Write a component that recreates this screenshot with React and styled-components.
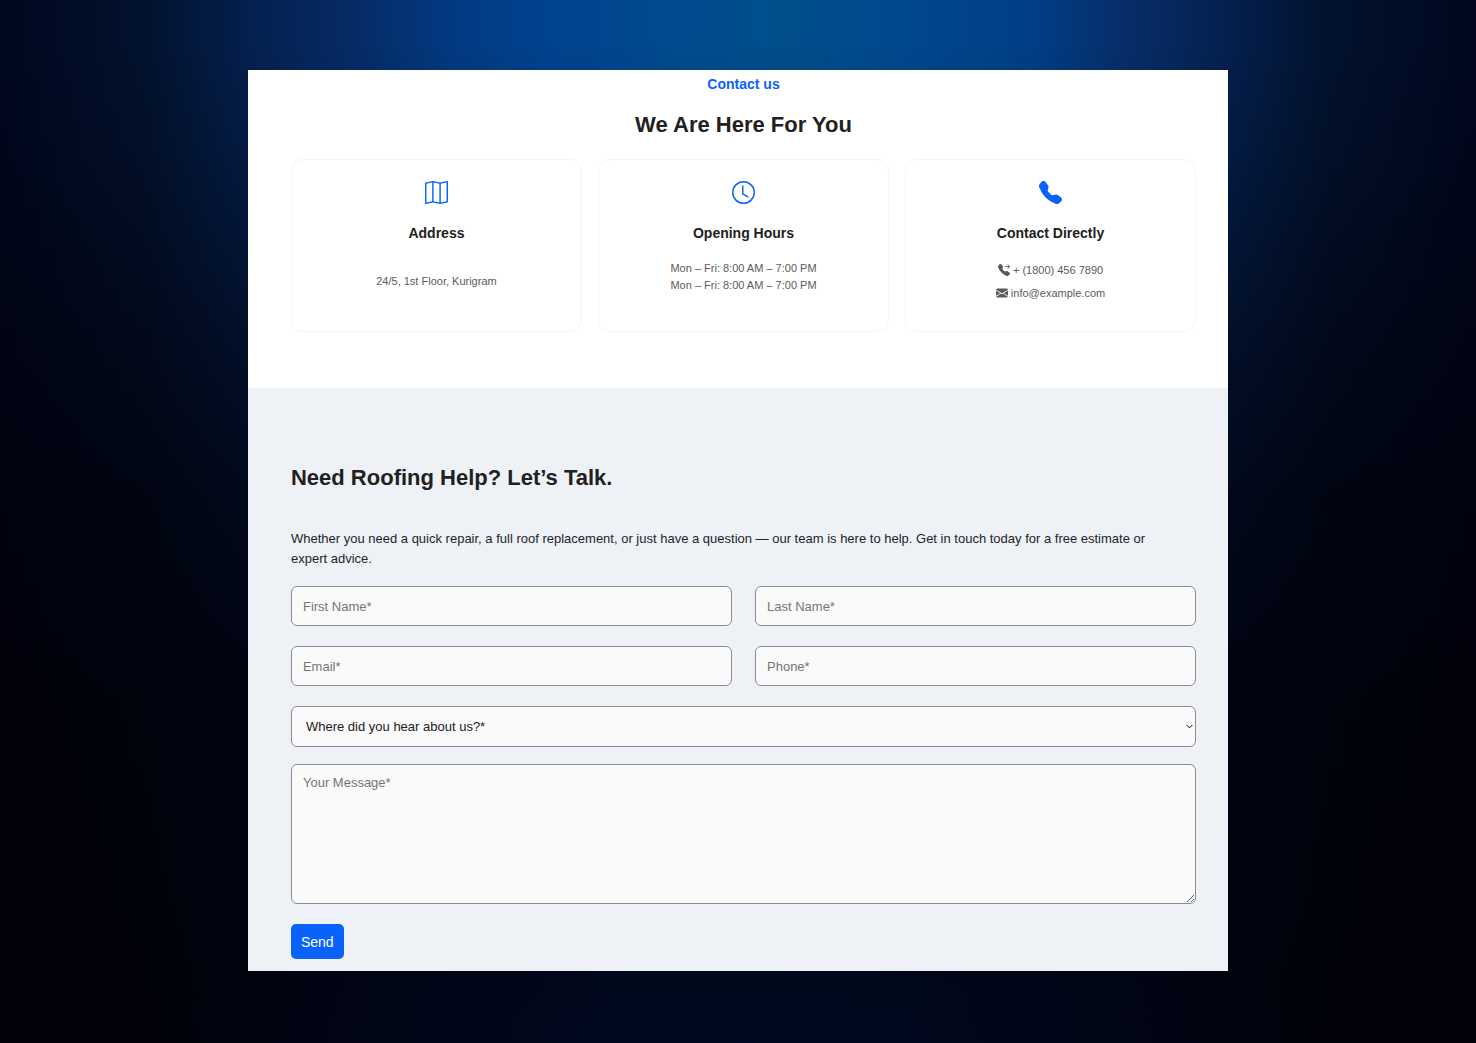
import React from 'react';
import styled, { createGlobalStyle } from 'styled-components';
import {
    BsMap,
    BsClock,
    BsTelephoneFill,
    BsTelephoneForwardFill,
    BsEnvelopeFill,
    BsChevronDown,
} from 'react-icons/bs';


const GlobalStyle = createGlobalStyle`
    * {
        box-sizing: border-box;
    }
    body {
        margin: 0;
        background: #00000a;
        color: #212529;
        font-family: "Liberation Sans", Arial, sans-serif;
        font-size: 14px;
        line-height: 20px;
    }
    h2, h3, p {
        margin: 0;
    }
`

const Backdrop = styled.div`
    min-height: 100vh;
    padding: 70px 16.8%;
    background:
        radial-gradient(ellipse 38% 16% at 50% 100%, rgba(0, 10, 40, 0.7), transparent),
        linear-gradient(
            rgba(0, 0, 8, 0) 4%,
            rgba(0, 0, 8, 0.18) 15%,
            rgba(0, 0, 8, 0.36) 24%,
            rgba(0, 0, 8, 0.54) 34%,
            rgba(0, 0, 8, 0.74) 48%,
            rgba(0, 0, 8, 0.88) 67%,
            rgba(0, 0, 8, 0.93) 100%
        ),
        linear-gradient(
            90deg,
            #00071e 0%,
            #02122e 10%,
            #04204e 17%,
            #062b66 24%,
            #023a82 31%,
            #00428e 37%,
            #004a8e 45%,
            #004e8a 53%,
            #00488e 61%,
            #003e86 70%,
            #062e6a 76%,
            #04204e 83%,
            #02122e 90%,
            #00071e 100%
        );
`

const Page = styled.main`
    background: #fff;
`

const InfoSection = styled.section`
    padding: 4px 32px 56px 43px;
    text-align: center;
`

const Eyebrow = styled.p`
    color: #0a63f8;
    font-weight: bold;
`

const Heading = styled.h2`
    color: #212121;
    font-size: 22px;
    line-height: 28px;
`

const InfoTitle = styled(Heading)`
    margin: 17px 0 20px;
`

const Cards = styled.div`
    display: grid;
    grid-template-columns: repeat(3, 1fr);
    gap: 16px;
`

const Card = styled.article`
    min-height: 173px;
    padding: 21px 16px;
    display: flex;
    flex-direction: column;
    align-items: center;
    border: 1px solid #f3f6f6;
    border-radius: 12px;

    > svg {
        color: #0a63f8;
        flex-shrink: 0;
    }
    h3 {
        margin: 19px 0 10px;
        color: #212121;
        font-size: 14px;
        line-height: 20px;
    }
`

const CardBody = styled.div`
    flex: 1;
    display: flex;
    flex-direction: column;
    justify-content: ${({ $align }) => $align || 'center'};
    padding-top: ${({ $align }) => ($align ? '7px' : '0')};
    color: #5a5a5a;
    font-size: 11px;
    line-height: 17px;
`

const ContactLink = styled.a`
    display: flex;
    justify-content: center;
    align-items: center;
    gap: 3px;
    padding: 3px 0;
    color: inherit;
    text-decoration: none;
`

const FormSection = styled.section`
    padding: 76px 32px 12px 43px;
    background: #eef2f7;
`

const Intro = styled.p`
    margin: 37px 0 17px;
    padding-right: 24px;
    font-size: 13px;
`

const Form = styled.form`
    display: flex;
    flex-direction: column;
    align-items: flex-start;
`

const FieldGrid = styled.div`
    width: 100%;
    display: grid;
    grid-template-columns: 1fr 1fr;
    gap: 20px 23px;
    margin-bottom: 20px;
`

const field = `
    width: 100%;
    border: 1px solid #8c8c90;
    border-radius: 6px;
    background: #fafafa;
    color: #212121;
    font-family: inherit;
    font-size: 13px;
    line-height: 20px;
    &::placeholder {
        color: #757575;
    }
`

const Input = styled.input`
    ${field}
    height: 40px;
    padding: 0 11px;
`

const SelectWrapper = styled.div`
    position: relative;
    width: 100%;
    margin-bottom: 17px;

    svg {
        position: absolute;
        top: 17px;
        right: 3px;
        pointer-events: none;
        stroke: currentColor;
        stroke-width: 1;
    }
`

const Select = styled.select`
    ${field}
    display: block;
    height: 41px;
    padding: 0 14px;
    appearance: none;
`

const Textarea = styled.textarea`
    ${field}
    display: block;
    height: 140px;
    padding: 8px 11px;
    margin-bottom: 20px;
    resize: vertical;
`

const SendButton = styled.button`
    height: 35px;
    padding: 0 10px;
    border: 0;
    border-radius: 5px;
    background: #0a63f8;
    color: #fff;
    font-family: inherit;
    font-size: 14px;
`

const fields = [
    { name: 'firstName', label: 'First Name*', type: 'text' },
    { name: 'lastName', label: 'Last Name*', type: 'text' },
    { name: 'email', label: 'Email*', type: 'email' },
    { name: 'phone', label: 'Phone*', type: 'tel' },
]


const App = () => {

    return (
        <>
            <GlobalStyle />
            <Backdrop>
                <Page>
                    <InfoSection>
                        <Eyebrow>Contact us</Eyebrow>
                        <InfoTitle>We Are Here For You</InfoTitle>
                        <Cards>
                            <Card>
                                <BsMap size={23} />
                                <h3>Address</h3>
                                <CardBody>
                                    <p>24/5, 1st Floor, Kurigram</p>
                                </CardBody>
                            </Card>
                            <Card>
                                <BsClock size={23} />
                                <h3>Opening Hours</h3>
                                <CardBody $align="flex-start">
                                    <p>Mon – Fri: 8:00 AM – 7:00 PM</p>
                                    <p>Mon – Fri: 8:00 AM – 7:00 PM</p>
                                </CardBody>
                            </Card>
                            <Card>
                                <BsTelephoneFill size={23} />
                                <h3>Contact Directly</h3>
                                <CardBody>
                                    <ContactLink href="tel:18004567890">
                                        <BsTelephoneForwardFill size={12} />
                                        + (1800) 456 7890
                                    </ContactLink>
                                    <ContactLink href="mailto:info@example.com">
                                        <BsEnvelopeFill size={12} />
                                        info@example.com
                                    </ContactLink>
                                </CardBody>
                            </Card>
                        </Cards>
                    </InfoSection>
                    <FormSection>
                        <Heading>Need Roofing Help? Let’s Talk.</Heading>
                        <Intro>
                            Whether you need a quick repair, a full roof replacement, or just have a question — our
                            team is here to help. Get in touch today for a free estimate or expert advice.
                        </Intro>
                        <Form onSubmit={(e) => e.preventDefault()}>
                            <FieldGrid>
                                {fields.map(({ name, label, type }) => (
                                    <Input key={name} name={name} type={type} placeholder={label} aria-label={label} />
                                ))}
                            </FieldGrid>
                            <SelectWrapper>
                                <Select name="source" aria-label="Where did you hear about us?*">
                                    <option>Where did you hear about us?*</option>
                                </Select>
                                <BsChevronDown size={7} />
                            </SelectWrapper>
                            <Textarea name="message" placeholder="Your Message*" aria-label="Your Message*" />
                            <SendButton type="submit">Send</SendButton>
                        </Form>
                    </FormSection>
                </Page>
            </Backdrop>
        </>
    )
}

export default App;
